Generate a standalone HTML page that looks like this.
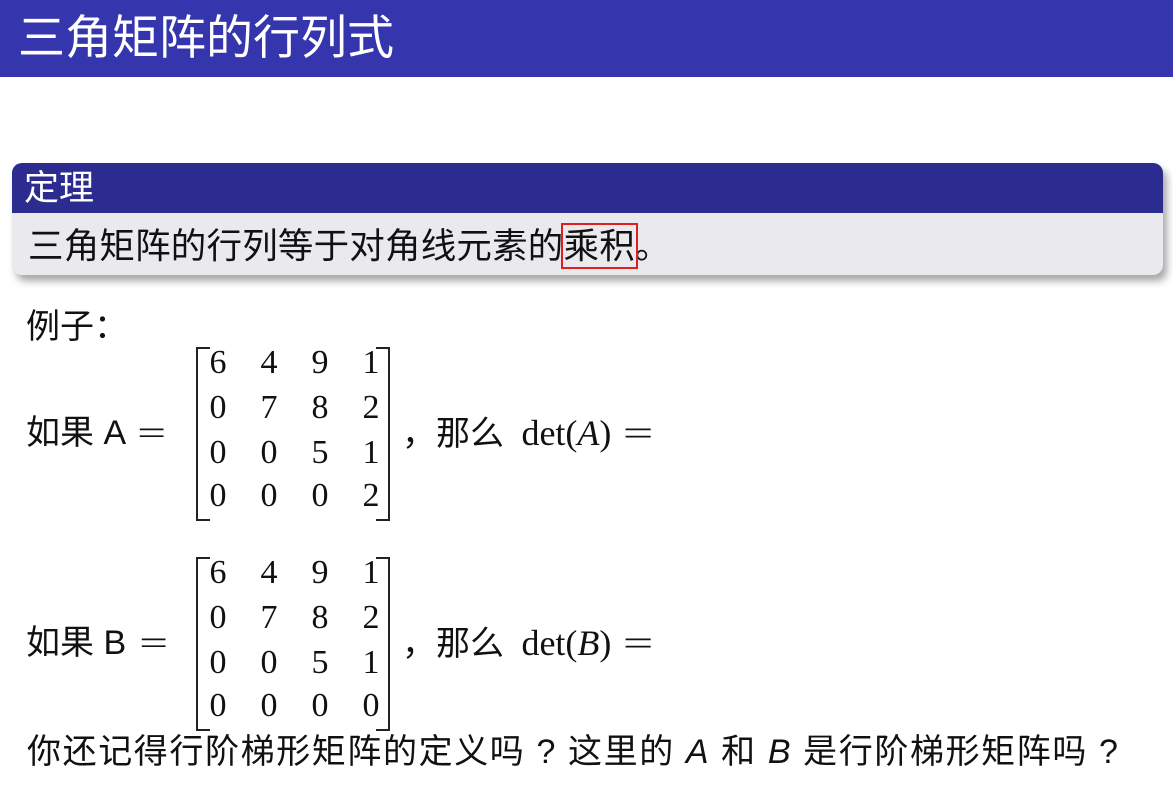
<!DOCTYPE html>
<html><head><meta charset="utf-8"><style>
body{margin:0;width:1173px;height:800px;background:#fff;position:relative;overflow:hidden;font-family:"Liberation Sans","Noto Sans CJK SC",sans-serif;color:#111}
.a{position:absolute;white-space:nowrap}
.title{left:0;top:0;width:1173px;height:77px;background:#3535ad}
.serif{font-family:"Liberation Serif",serif}
.m{position:absolute;font-family:"Liberation Serif",serif;font-size:34px;text-align:center;width:30px}
.br{position:absolute;border:2px solid #222;width:12px}
.eq{font-family:"Liberation Serif",serif;display:inline-block;transform:scaleX(1.5);margin:0 8px}
</style></head><body>
<div class="a title"></div>
<div class="a" style="left:18px;top:10px;font-size:47px;color:#fff;line-height:56px">三角矩阵的行列式</div>

<div class="a" style="left:12px;top:163px;width:1151px;height:112px;border-radius:10px;background:#e9e9ee;box-shadow:4px 6px 8px rgba(0,0,0,0.35);overflow:hidden">
  <div style="height:50px;background:#2c2c90"></div>
</div>
<div class="a" style="left:24px;top:166px;font-size:35px;color:#fff;line-height:46px">定理</div>
<div class="a" style="left:28px;top:222px;font-size:35.5px;line-height:48px;letter-spacing:0.2px">三角矩阵的行列等于对角线元素的<span style="outline:2px solid #e02020;outline-offset:1px">乘积</span>。</div>

<div class="a" style="left:26px;top:305px;font-size:34px;line-height:44px">例子：</div>

<!-- Matrix A -->
<div class="a" style="left:26px;top:410px;font-size:34px;line-height:46px">如果 A <span class="eq">=</span></div>
<div class="br" style="left:196px;top:347px;height:170px;border-right:none"></div>
<div class="br" style="left:376px;top:347px;height:170px;border-left:none"></div>
<div class="m" style="left:203px;top:344px">6</div><div class="m" style="left:254px;top:344px">4</div><div class="m" style="left:305px;top:344px">9</div><div class="m" style="left:356px;top:344px">1</div>
<div class="m" style="left:203px;top:389px">0</div><div class="m" style="left:254px;top:389px">7</div><div class="m" style="left:305px;top:389px">8</div><div class="m" style="left:356px;top:389px">2</div>
<div class="m" style="left:203px;top:434px">0</div><div class="m" style="left:254px;top:434px">0</div><div class="m" style="left:305px;top:434px">5</div><div class="m" style="left:356px;top:434px">1</div>
<div class="m" style="left:203px;top:477px">0</div><div class="m" style="left:254px;top:477px">0</div><div class="m" style="left:305px;top:477px">0</div><div class="m" style="left:356px;top:477px">2</div>
<div class="a" style="left:402px;top:410px;font-size:34px;line-height:46px">，那么 <span class="serif" style="font-size:36px;margin-left:8px">det(<i>A</i>) <span class="eq">=</span></span></div>

<!-- Matrix B -->
<div class="a" style="left:26px;top:620px;font-size:34px;line-height:46px">如果 B <span class="eq">=</span></div>
<div class="br" style="left:196px;top:557px;height:170px;border-right:none"></div>
<div class="br" style="left:376px;top:557px;height:170px;border-left:none"></div>
<div class="m" style="left:203px;top:554px">6</div><div class="m" style="left:254px;top:554px">4</div><div class="m" style="left:305px;top:554px">9</div><div class="m" style="left:356px;top:554px">1</div>
<div class="m" style="left:203px;top:599px">0</div><div class="m" style="left:254px;top:599px">7</div><div class="m" style="left:305px;top:599px">8</div><div class="m" style="left:356px;top:599px">2</div>
<div class="m" style="left:203px;top:644px">0</div><div class="m" style="left:254px;top:644px">0</div><div class="m" style="left:305px;top:644px">5</div><div class="m" style="left:356px;top:644px">1</div>
<div class="m" style="left:203px;top:687px">0</div><div class="m" style="left:254px;top:687px">0</div><div class="m" style="left:305px;top:687px">0</div><div class="m" style="left:356px;top:687px">0</div>
<div class="a" style="left:402px;top:620px;font-size:34px;line-height:46px">，那么 <span class="serif" style="font-size:36px;margin-left:8px">det(<i>B</i>) <span class="eq">=</span></span></div>

<div class="a" style="left:27px;top:730px;font-size:34px;line-height:44px;letter-spacing:1.6px">你还记得行阶梯形矩阵的定义吗 ? 这里的 <i>A</i> 和 <i>B</i> 是行阶梯形矩阵吗 ?</div>
</body></html>
